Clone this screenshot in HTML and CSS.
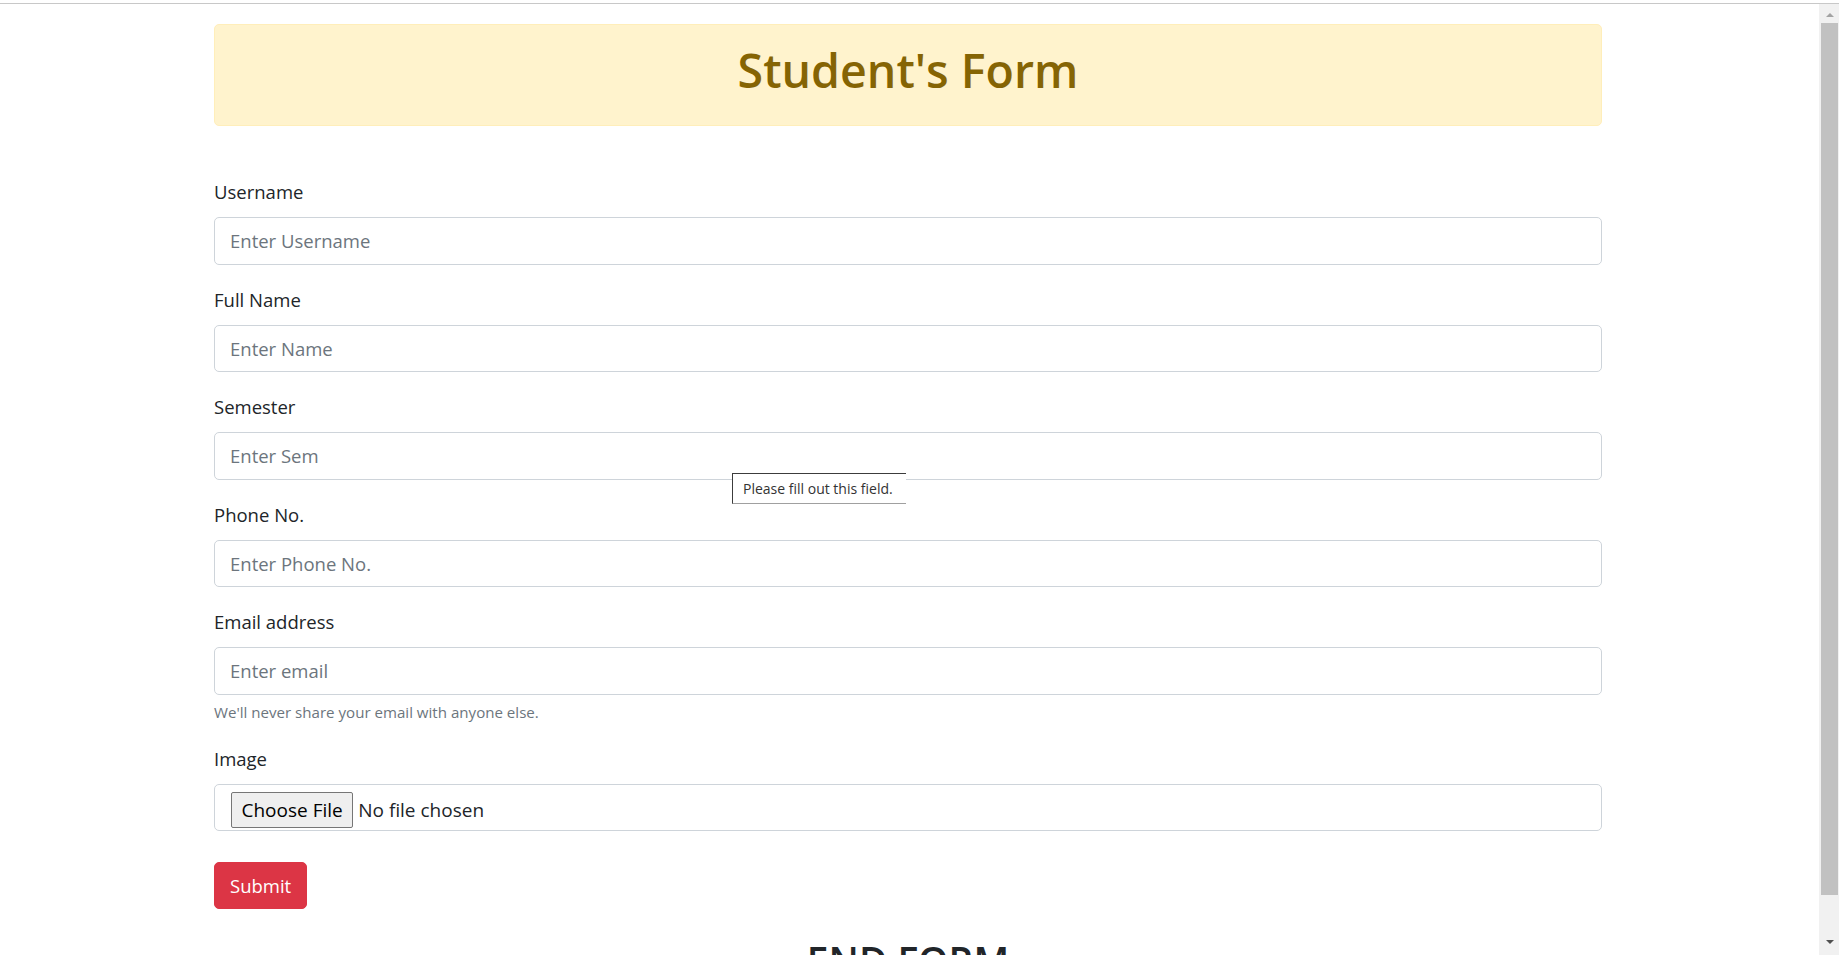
FILE: index.html
```html
<!DOCTYPE html>
<html lang="en">
<head>
<meta charset="utf-8">
<title>Student's Form</title>
<link rel="stylesheet" href="styles.css">
</head>
<body>
<div class="chrome-line"></div>
<div class="window">
  <main class="page">
    <div class="container">
      <div class="alert">
        <h1 class="alert-title">Student's Form</h1>
      </div>
      <form class="form">
        <div class="form-group">
          <label class="form-label" for="username">Username</label>
          <input class="form-control" id="username" type="text" placeholder="Enter Username">
        </div>
        <div class="form-group">
          <label class="form-label" for="fullname">Full Name</label>
          <input class="form-control" id="fullname" type="text" placeholder="Enter Name">
        </div>
        <div class="form-group anchor">
          <label class="form-label" for="sem">Semester</label>
          <input class="form-control" id="sem" type="text" placeholder="Enter Sem">
          <div class="tooltip">Please fill out this field.</div>
        </div>
        <div class="form-group">
          <label class="form-label" for="phone">Phone No.</label>
          <input class="form-control" id="phone" type="text" placeholder="Enter Phone No.">
        </div>
        <div class="form-group">
          <label class="form-label" for="email">Email address</label>
          <input class="form-control" id="email" type="email" placeholder="Enter email">
          <small class="form-text">We'll never share your email with anyone else.</small>
        </div>
        <div class="form-group">
          <label class="form-label" for="image">Image</label>
          <div class="form-control file-control">
            <span class="file-button">Choose File</span>
            <span class="file-name">No file chosen</span>
          </div>
        </div>
        <button class="btn-submit" type="button">Submit</button>
      </form>
      <h2 class="end-title">END FORM</h2>
    </div>
  </main>
  <div class="scrollbar">
    <div class="arrow arrow-up"></div>
    <div class="thumb"></div>
    <div class="arrow arrow-down"></div>
  </div>
</div>
</body>
</html>
```

FILE: styles.css
```css
* { box-sizing: border-box; }

html, body {
  margin: 0;
  padding: 0;
  height: 955px;
  overflow: hidden;
  background: #fff;
}

body {
  font-family: "Open Sans", "Noto Sans", sans-serif;
  color: #212529;
}

.chrome-line {
  height: 4px;
  border-bottom: 1px solid #c8c8c8;
}

.window {
  display: flex;
  height: 951px;
}

.page {
  flex: 1;
  overflow: hidden;
  padding: 20px 0 0 214px;
}

.container {
  width: 1388px;
}

.alert {
  background: #fff3cd;
  border: 1px solid #ffeeba;
  border-radius: 5px;
  padding: 15px 25px;
  margin-bottom: 20px;
}

.alert-title {
  margin: 0 0 10px;
  font-size: 46.5px;
  line-height: 60px;
  font-weight: 600;
  color: #856404;
  text-align: center;
}

.form {
  padding-top: 31px;
}

.form-group {
  margin-bottom: 20px;
}

.anchor {
  position: relative;
}

.form-label {
  display: block;
  font-size: 18.5px;
  line-height: 30px;
  margin-bottom: 10px;
  color: #212529;
}

.form-control {
  display: block;
  width: 100%;
  height: 47.5px;
  padding: 7.5px 15px;
  font-family: inherit;
  font-size: 18.5px;
  line-height: 30px;
  color: #495057;
  background: #fff;
  border: 1px solid #ced4da;
  border-radius: 5px;
  outline: none;
}

.form-control::placeholder {
  color: #6c757d;
  opacity: 1;
}

.form-text {
  display: block;
  margin-top: 5px;
  font-size: 15.1px;
  line-height: 24px;
  color: #6c757d;
}

.file-control {
  display: flex;
  align-items: flex-start;
  padding: 7.5px 0 0 16px;
}

.file-button {
  display: flex;
  align-items: center;
  height: 36px;
  padding: 0 9.5px;
  background: #efefef;
  border: 1px solid #767676;
  border-radius: 2px;
  color: #000;
  font-size: 19px;
  margin-right: 5px;
}

.file-name {
  display: flex;
  align-items: center;
  height: 36px;
  font-size: 19px;
  color: #212529;
}

.btn-submit {
  display: block;
  margin-top: 30.5px;
  height: 47.5px;
  padding: 0 15px;
  font-family: inherit;
  font-size: 18.5px;
  color: #fff;
  background: #dc3545;
  border: 1px solid #dc3545;
  border-radius: 5px;
}

.end-title {
  margin: 27.5px 0 0;
  font-size: 38.8px;
  line-height: 48px;
  font-weight: 600;
  text-align: center;
  color: #212529;
}

.tooltip {
  position: absolute;
  left: 518px;
  top: 81px;
  width: 174px;
  height: 31px;
  display: flex;
  align-items: center;
  padding-left: 10px;
  background: #fff;
  border-top: 1px solid #3c3c3c;
  border-left: 1px solid #3c3c3c;
  border-bottom: 1px solid #a0a0a0;
  font-size: 14px;
  color: #333;
  white-space: nowrap;
}

.scrollbar {
  width: 20px;
  flex: none;
  background: #f1f1f1;
  display: flex;
  flex-direction: column;
  align-items: center;
  padding-left: 1px;
}

.arrow {
  width: 0;
  height: 0;
  border-left: 4.5px solid transparent;
  border-right: 4.5px solid transparent;
}

.arrow-up {
  margin-top: 9px;
  border-bottom: 4.5px solid #a3a3a3;
}

.thumb {
  margin-top: 6px;
  width: 17px;
  height: 872px;
  background: #c1c1c1;
}

.arrow-down {
  margin-top: 45px;
  border-top: 4.5px solid #505050;
}
```
